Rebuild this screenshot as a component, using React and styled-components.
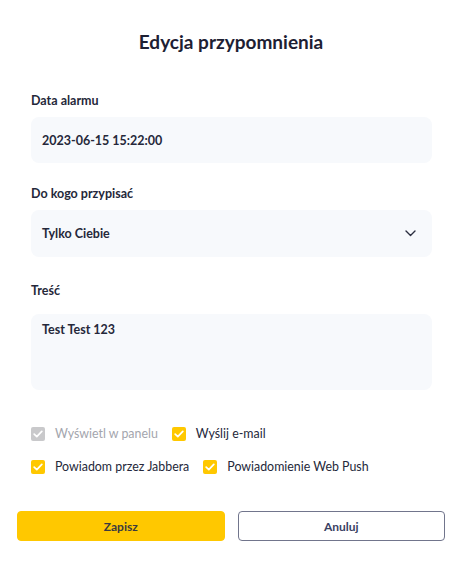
import React from "react";
import styled, {createGlobalStyle} from "styled-components";

const GlobalStyle = createGlobalStyle`
  html, body {
    margin: 0;
    padding: 0;
    background: #ffffff;
  }

  body {
    font-family: Lato, "Open Sans", sans-serif;
    color: #25283a;
  }
`;

const Check = () => (
    <svg width="10" height="8" viewBox="0 0 10 8" fill="none">
        <polyline points="1.2,4.2 3.8,6.6 8.8,1.4" stroke="#ffffff" strokeWidth="1.7"
                  strokeLinecap="round" strokeLinejoin="round"/>
    </svg>
);

const Chevron = () => (
    <svg width="11" height="7" viewBox="0 0 11 7" fill="none">
        <polyline points="1,1 5.5,5.5 10,1" stroke="#2b2e40" strokeWidth="1.4"
                  strokeLinecap="round" strokeLinejoin="round"/>
    </svg>
);

const Option = ({checked = true, disabled, children}) => (
    <OptionLabel $disabled={disabled}>
        <Box $checked={checked} $disabled={disabled}>
            {checked && <Check/>}
        </Box>
        {children}
    </OptionLabel>
);

export default function App() {
    return (
        <>
            <GlobalStyle/>
            <Modal>
                <Title>Edycja przypomnienia</Title>

                <Form>
                    <Field $top={39}>
                        <Label>Data alarmu</Label>
                        <Input>2023-06-15 15:22:00</Input>
                    </Field>

                    <Field $top={23}>
                        <Label>Do kogo przypisać</Label>
                        <Select>
                            Tylko Ciebie
                            <Chevron/>
                        </Select>
                    </Field>

                    <Field $top={26} $labelGap={15}>
                        <Label>Treść</Label>
                        <TextArea>Test Test 123</TextArea>
                    </Field>

                    <Options>
                        <OptionRow>
                            <Option disabled>Wyświetl w panelu</Option>
                            <Option>Wyślij e-mail</Option>
                        </OptionRow>
                        <OptionRow>
                            <Option>Powiadom przez Jabbera</Option>
                            <Option>Powiadomienie Web Push</Option>
                        </OptionRow>
                    </Options>
                </Form>

                <Buttons>
                    <SaveButton>Zapisz</SaveButton>
                    <CancelButton>Anuluj</CancelButton>
                </Buttons>
            </Modal>
        </>
    );
}

const Modal = styled.div`
  width: 466px;
  box-sizing: border-box;
  padding: 30px 21px 32px 17px;
  display: flex;
  flex-direction: column;
`;

const Title = styled.h1`
  margin: 0;
  text-align: center;
  font-size: 19px;
  line-height: 24px;
  font-weight: 700;
  color: #1d2033;
`;

const Form = styled.div`
  padding: 0 13px 0 14px;
  display: flex;
  flex-direction: column;
`;

const Field = styled.div`
  margin-top: ${p => p.$top}px;
  display: flex;
  flex-direction: column;
  gap: ${p => p.$labelGap || 8}px;
`;

const Label = styled.div`
  font-size: 12.5px;
  line-height: 16px;
  font-weight: 700;
  color: #25283a;
`;

const Input = styled.div`
  height: 46px;
  box-sizing: border-box;
  padding: 0 11px;
  display: flex;
  align-items: center;
  background: #f7f9fc;
  border-radius: 8px;
  font-size: 12.5px;
  font-weight: 700;
  color: #25283a;
`;

const Select = styled(Input)`
  height: 47px;
  justify-content: space-between;
  padding-right: 16px;
`;

const TextArea = styled.div`
  height: 76px;
  box-sizing: border-box;
  padding: 8px 11px;
  background: #f7f9fc;
  border-radius: 8px;
  font-size: 12.5px;
  line-height: 16px;
  font-weight: 700;
  color: #25283a;
`;

const Options = styled.div`
  margin-top: 36px;
  display: flex;
  flex-direction: column;
  gap: 17px;
`;

const OptionRow = styled.div`
  display: flex;
  align-items: center;
  gap: 14px;
`;

const OptionLabel = styled.label`
  display: flex;
  align-items: center;
  gap: 10px;
  font-size: 12.4px;
  line-height: 16px;
  color: ${p => p.$disabled ? "#a3a5ad" : "#25283a"};
`;

const Box = styled.span`
  width: 14px;
  height: 14px;
  border-radius: 2px;
  display: flex;
  align-items: center;
  justify-content: center;
  background: ${p => p.$disabled ? "#c9c9cb" : "#ffc800"};
`;

const Buttons = styled.div`
  margin-top: 36px;
  display: grid;
  grid-template-columns: 1fr 1fr;
  gap: 13px;
`;

const Button = styled.button`
  height: 30px;
  border-radius: 4px;
  font-family: Lato, "Open Sans", sans-serif;
  font-size: 12px;
  font-weight: 700;
  cursor: pointer;
`;

const SaveButton = styled(Button)`
  border: 1px solid #ffc800;
  background: #ffc800;
  color: #3a3a40;
`;

const CancelButton = styled(Button)`
  border: 1.5px solid #71758c;
  background: #ffffff;
  color: #3a3f63;
`;
